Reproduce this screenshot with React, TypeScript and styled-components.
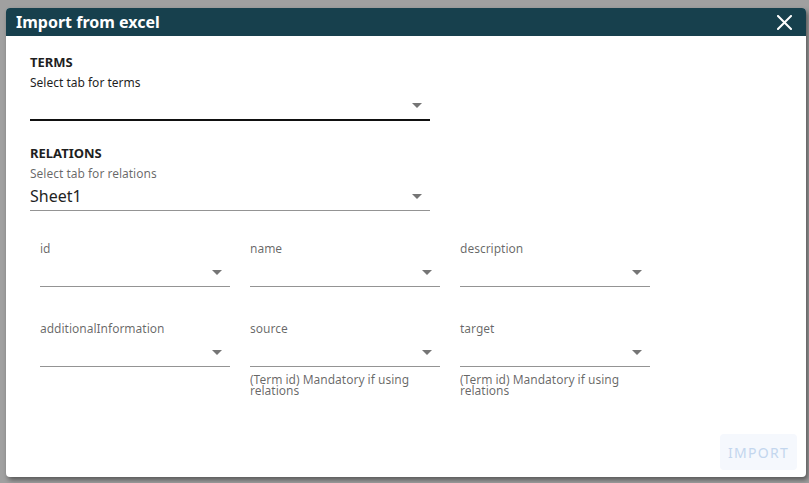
import React, { FC } from 'react';
import styled, { createGlobalStyle } from 'styled-components';

const GlobalStyle = createGlobalStyle`
	html, body {
		margin: 0;
		padding: 0;
		background: #a0a0a0;
		font-family: 'Noto Sans', 'Open Sans', sans-serif;
	}
	* {
		box-sizing: border-box;
	}
`;

const Colors = {
	HEADER: '#17404d',
	DARK: '#1f1f1f',
	MUTED: 'rgba(0, 0, 0, 0.6)',
	LINE: 'rgba(0, 0, 0, 0.42)',
	ARROW: '#757575',
};

interface SelectProps {
	value?: string;
	focused?: boolean;
}

const ArrowIcon: FC = () => (
	<svg width="10" height="5" viewBox="0 0 10 5">
		<path d="M0 0 L10 0 L5 5 Z" fill={Colors.ARROW} />
	</svg>
);

const Select: FC<SelectProps> = ({ value, focused }) => (
	<SelectBox $focused={focused}>
		<SelectValue>{value}</SelectValue>
		<ArrowIcon />
	</SelectBox>
);

interface ColumnFieldProps {
	label: string;
	helper?: string;
}

const ColumnField: FC<ColumnFieldProps> = ({ label, helper }) => (
	<Field>
		<FieldLabel>{label}</FieldLabel>
		<Select />
		{helper && <Helper>{helper}</Helper>}
	</Field>
);

const columns: ColumnFieldProps[] = [
	{ label: 'id' },
	{ label: 'name' },
	{ label: 'description' },
	{ label: 'additionalInformation' },
	{ label: 'source', helper: '(Term id) Mandatory if using relations' },
	{ label: 'target', helper: '(Term id) Mandatory if using relations' },
];

const App: FC = () => {
	return (
		<>
			<GlobalStyle />
			<Backdrop>
				<Dialog>
					<Header>
						<Title>Import from excel</Title>
						<CloseButton aria-label="close">
							<svg width="15" height="15" viewBox="0 0 15 15">
								<path
									d="M1 1 L14 14 M14 1 L1 14"
									stroke="#fff"
									strokeWidth="2"
									strokeLinecap="square"
								/>
							</svg>
						</CloseButton>
					</Header>
					<Content>
						<Section>
							<SectionTitle>TERMS</SectionTitle>
							<SectionLabel $dark>Select tab for terms</SectionLabel>
							<Select focused />
						</Section>
						<Section>
							<SectionTitle>RELATIONS</SectionTitle>
							<SectionLabel>Select tab for relations</SectionLabel>
							<Select value="Sheet1" />
						</Section>
						<ColumnGrid>
							{columns.map((c) => (
								<ColumnField key={c.label} label={c.label} helper={c.helper} />
							))}
						</ColumnGrid>
					</Content>
					<Footer>
						<ImportButton disabled>IMPORT</ImportButton>
					</Footer>
				</Dialog>
			</Backdrop>
		</>
	);
};

export default App;

const Backdrop = styled.div`
	height: 100vh;
	padding: 8px 3px 6px 6px;
`;

const Dialog = styled.section`
	width: 800px;
	height: 469px;
	background: #fff;
	border-radius: 4px;
	overflow: hidden;
	display: flex;
	flex-direction: column;
	box-shadow: 2px 3px 5px rgba(0, 0, 0, 0.45);
`;

const Header = styled.header`
	height: 28px;
	background: ${Colors.HEADER};
	display: flex;
	align-items: center;
	justify-content: space-between;
	padding: 0 14px 0 10px;
`;

const Title = styled.h1`
	margin: 0;
	font-size: 16px;
	font-weight: 700;
	color: #fff;
	line-height: 22px;
`;

const CloseButton = styled.button`
	border: none;
	background: none;
	padding: 0;
	display: flex;
	cursor: pointer;
`;

const Content = styled.div`
	flex: 1;
	padding: 17px 24px 0;
	display: flex;
	flex-direction: column;
`;

const Section = styled.div`
	width: 400px;
	display: flex;
	flex-direction: column;
	margin-bottom: 23px;

	& + & {
		margin-bottom: 30px;
	}
`;

const SectionTitle = styled.h2`
	margin: 0;
	font-size: 13px;
	font-weight: 700;
	line-height: 18px;
	color: ${Colors.DARK};
`;

const SectionLabel = styled.span<{ $dark?: boolean }>`
	margin-top: 4px;
	font-size: 12px;
	line-height: 16px;
	color: ${(p) => (p.$dark ? Colors.DARK : Colors.MUTED)};
`;

const SelectBox = styled.div<{ $focused?: boolean }>`
	height: ${(p) => (p.$focused ? '30px' : '29px')};
	display: flex;
	align-items: center;
	justify-content: space-between;
	padding: 0 8px 0 0;
	border-bottom: ${(p) => (p.$focused ? `2px solid #111` : `1px solid ${Colors.LINE}`)};
`;

const SelectValue = styled.span`
	font-size: 16px;
	line-height: 24px;
	color: ${Colors.DARK};
`;

const ColumnGrid = styled.div`
	display: grid;
	grid-template-columns: repeat(3, 190px);
	column-gap: 20px;
	row-gap: 34px;
	padding-left: 10px;
	align-items: start;
`;

const Field = styled.div`
	display: flex;
	flex-direction: column;
`;

const FieldLabel = styled.span`
	font-size: 12px;
	line-height: 16px;
	margin-bottom: 1px;
	color: ${Colors.MUTED};
`;

const Helper = styled.span`
	margin-top: 7px;
	font-size: 12px;
	line-height: 11px;
	color: ${Colors.MUTED};
	padding-right: 10px;
`;

const Footer = styled.footer`
	display: flex;
	justify-content: flex-end;
	padding: 8px 9px 7px;
`;

const ImportButton = styled.button`
	width: 77px;
	height: 36px;
	border: none;
	border-radius: 4px;
	background: #f5f8fd;
	color: #c3d6ee;
	font-family: 'Noto Sans', sans-serif;
	font-size: 14px;
	letter-spacing: 1.3px;
	padding: 0;
`;
